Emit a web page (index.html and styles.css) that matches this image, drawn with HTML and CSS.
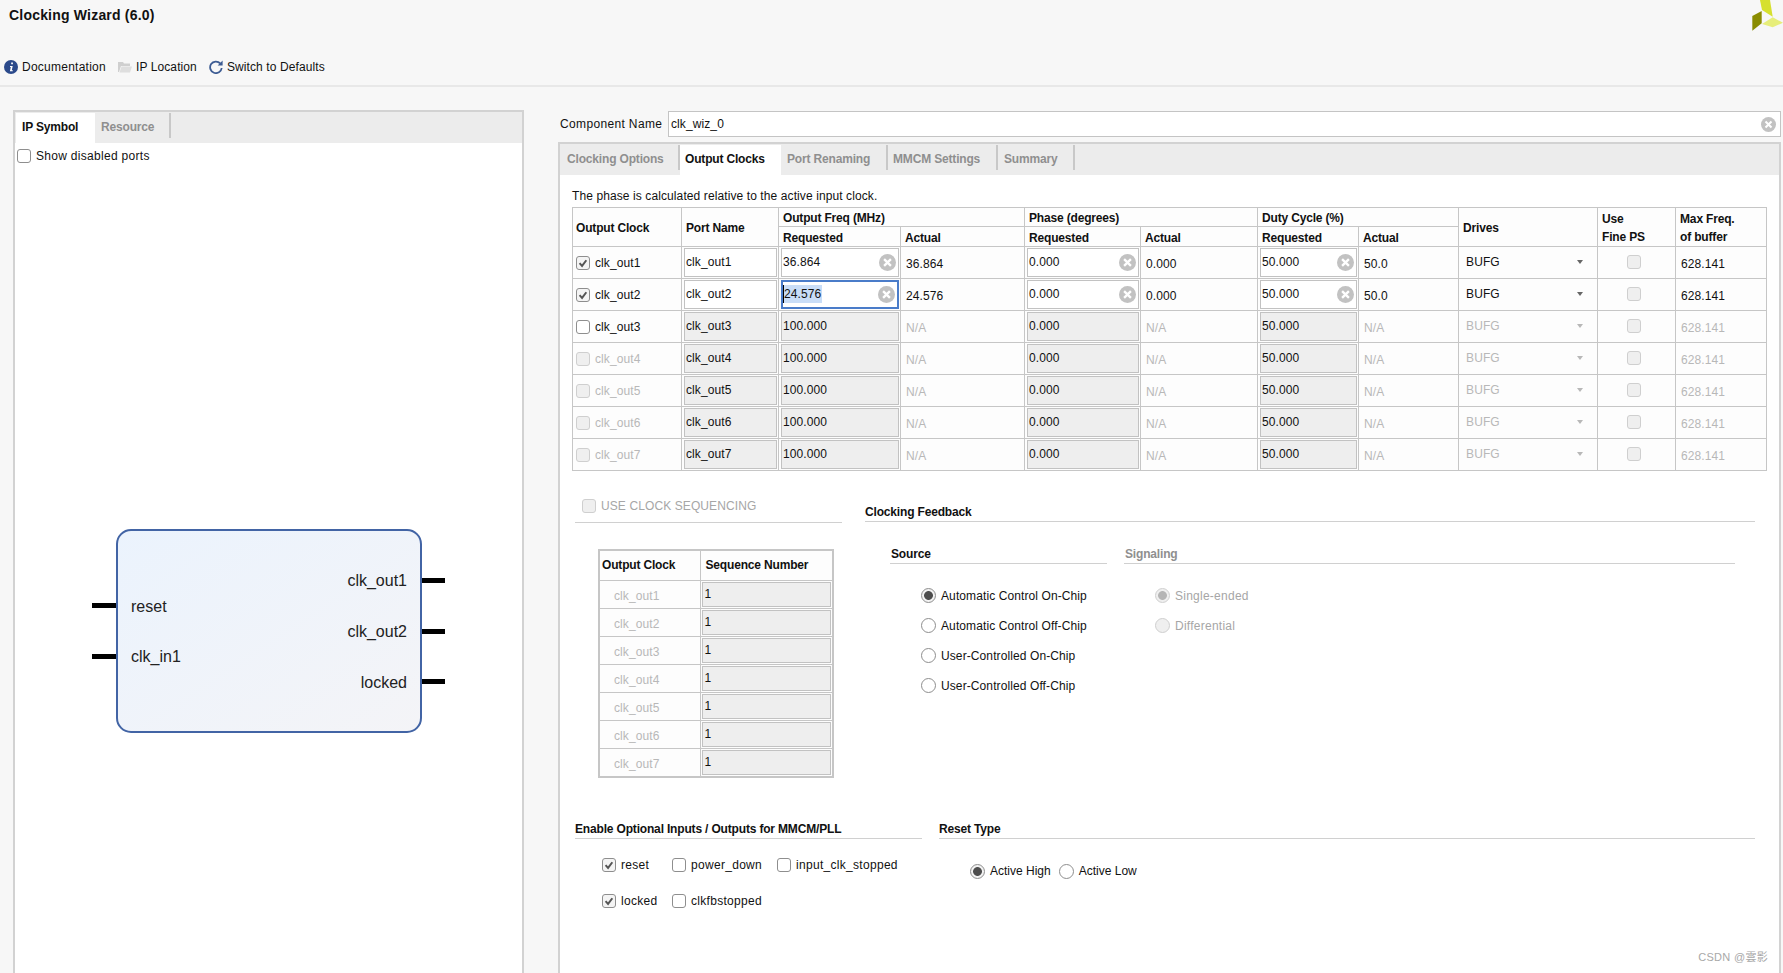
FILE: index.html
```html
<!DOCTYPE html>
<html lang="en">
<head>
<meta charset="utf-8">
<title>Clocking Wizard (6.0)</title>
<link rel="stylesheet" href="styles.css">
</head>
<body>
<svg class="defs" width="0" height="0">
  <symbol id="check" viewBox="0 0 14 14"><path d="M3 7.200l2.900 3.200 5-6.600" fill="none" stroke="#555" stroke-width="2.300"/></symbol>
  <symbol id="clear" viewBox="0 0 16 16"><circle cx="8" cy="8" r="8" fill="#c2c2c2"/><path d="M4.800 4.800l6.400 6.400M11.200 4.800l-6.400 6.400" stroke="#fff" stroke-width="2.200"/></symbol>
</svg>
<header class="top">
  <div class="top-row">
    <div class="title">Clocking Wizard (6.0)</div>
    <svg class="logo" width="31" height="31" viewBox="0 0 31 31">
      <path d="M8 0h10l2.700 16.700L10 10z" fill="#d6e02f"/>
      <path d="M10 24l10.700-6.700L31 22.700l-10.300 4.600z" fill="#e7ee7a"/>
      <path d="M.3 16l9.400-5v12.300L.3 30.700z" fill="#8a8c00"/>
    </svg>
  </div>
  <nav class="toolbar">
    <span class="tool tool-doc"><svg width="14" height="14" viewBox="0 0 14 14"><circle cx="7" cy="7" r="7" fill="#2b4a8b"/><path d="M7.200 2.600h1.700v1.600H7.200zM6 6h2.700L7.800 10.300h1v1H5.900l.9-4.300H6z" fill="#fff"/></svg>Documentation</span>
    <span class="tool tool-loc"><svg width="14" height="14" viewBox="0 0 14 14"><path d="M0 2h5l1 1.500h6V6H3L1 12H0z" fill="#cfcfcf"/><path d="M3.500 6.500H14L12 12.500H1.500z" fill="#dedede"/></svg>IP Location</span>
    <span class="tool"><svg width="14" height="14" viewBox="0 0 14 14"><path d="M11.200 3.400A5.800 5.800 0 1 0 12.700 8" fill="none" stroke="#3d5c93" stroke-width="1.800"/><path d="M13.600 .6v5h-5z" fill="#3d5c93"/></svg>Switch to Defaults</span>
  </nav>
</header>
<main class="main">
  <section class="panel left-panel">
    <div class="tabs">
      <div class="tab active t-sym">IP Symbol</div>
      <div class="tab t-res">Resource</div>
    </div>
    <label class="opt show-ports"><span class="cb"></span>Show disabled ports</label>
    <svg class="symbol" width="380" height="230" viewBox="80 515 380 230">
      <defs><linearGradient id="blk" x1="0" y1="0" x2="1" y2="1"><stop offset="0" stop-color="#ebf3fd"/><stop offset="1" stop-color="#f4f4f7"/></linearGradient></defs>
      <rect x="117" y="530" width="304" height="202" rx="14" fill="url(#blk)" stroke="#4264a5" stroke-width="2"/>
      <g class="pins">
        <path d="M92 605.500h24M92 656.500h24M422 580.500h23M422 631.500h23M422 681.500h23"/>
      </g>
      <text class="pin-label" x="131" y="612">reset</text>
      <text class="pin-label" x="131" y="662">clk_in1</text>
      <text class="pin-label end" x="407" y="586">clk_out1</text>
      <text class="pin-label end" x="407" y="637">clk_out2</text>
      <text class="pin-label end" x="407" y="688">locked</text>
    </svg>
  </section>
  <div class="right-col">
    <div class="comp-row">
      <span class="comp-label">Component Name</span>
      <div class="comp-input"><span>clk_wiz_0</span><svg class="clear small"><use href="#clear"/></svg></div>
    </div>
    <section class="panel right-panel">
      <div class="tabs">
        <div class="tab t1">Clocking Options</div>
        <div class="tab active t2">Output Clocks</div>
        <div class="tab t3">Port Renaming</div>
        <div class="tab t4">MMCM Settings</div>
        <div class="tab t5">Summary</div>
      </div>
      <div class="pane">
        <p class="note">The phase is calculated relative to the active input clock.</p>
        <table class="clocks">
          <colgroup>
            <col class="c1"><col class="c2"><col class="c3"><col class="c4"><col class="c5"><col class="c6"><col class="c7"><col class="c8"><col class="c9"><col class="c10"><col class="c11">
          </colgroup>
          <thead>
            <tr class="h1">
              <th rowspan="2" class="first">Output Clock</th><th rowspan="2">Port Name</th>
              <th colspan="2">Output Freq (MHz)</th><th colspan="2">Phase (degrees)</th><th colspan="2">Duty Cycle (%)</th>
              <th rowspan="2">Drives</th><th rowspan="2" class="two">Use<br>Fine PS</th><th rowspan="2" class="two">Max Freq.<br>of buffer</th>
            </tr>
            <tr class="h2"><th>Requested</th><th>Actual</th><th>Requested</th><th>Actual</th><th>Requested</th><th>Actual</th></tr>
          </thead>
          <tbody>
            <tr>
              <td class="first"><label class="opt"><span class="cb on"><svg><use href="#check"/></svg></span>clk_out1</label></td>
              <td class="fc"><div class="field">clk_out1</div></td>
              <td class="fc"><div class="field"><span>36.864</span><svg class="clear"><use href="#clear"/></svg></div></td>
              <td class="val">36.864</td>
              <td class="fc"><div class="field"><span>0.000</span><svg class="clear"><use href="#clear"/></svg></div></td>
              <td class="val">0.000</td>
              <td class="fc"><div class="field"><span>50.000</span><svg class="clear"><use href="#clear"/></svg></div></td>
              <td class="val">50.0</td>
              <td><div class="drive"><span>BUFG</span><i class="caret"></i></div></td>
              <td class="mid"><span class="cb off"></span></td>
              <td class="val">628.141</td>
            </tr>
            <tr>
              <td class="first"><label class="opt"><span class="cb on"><svg><use href="#check"/></svg></span>clk_out2</label></td>
              <td class="fc"><div class="field">clk_out2</div></td>
              <td class="fc"><div class="field focus"><span class="sel">24.576</span><svg class="clear"><use href="#clear"/></svg></div></td>
              <td class="val">24.576</td>
              <td class="fc"><div class="field"><span>0.000</span><svg class="clear"><use href="#clear"/></svg></div></td>
              <td class="val">0.000</td>
              <td class="fc"><div class="field"><span>50.000</span><svg class="clear"><use href="#clear"/></svg></div></td>
              <td class="val">50.0</td>
              <td><div class="drive"><span>BUFG</span><i class="caret"></i></div></td>
              <td class="mid"><span class="cb off"></span></td>
              <td class="val">628.141</td>
            </tr>
            <tr>
              <td class="first"><label class="opt"><span class="cb"></span>clk_out3</label></td>
              <td class="fc"><div class="field dis">clk_out3</div></td>
              <td class="fc"><div class="field dis">100.000</div></td>
              <td class="val na">N/A</td>
              <td class="fc"><div class="field dis">0.000</div></td>
              <td class="val na">N/A</td>
              <td class="fc"><div class="field dis">50.000</div></td>
              <td class="val na">N/A</td>
              <td><div class="drive na"><span>BUFG</span><i class="caret"></i></div></td>
              <td class="mid"><span class="cb off"></span></td>
              <td class="val na">628.141</td>
            </tr>
            <tr>
              <td class="first"><label class="opt na"><span class="cb off"></span>clk_out4</label></td>
              <td class="fc"><div class="field dis">clk_out4</div></td>
              <td class="fc"><div class="field dis">100.000</div></td>
              <td class="val na">N/A</td>
              <td class="fc"><div class="field dis">0.000</div></td>
              <td class="val na">N/A</td>
              <td class="fc"><div class="field dis">50.000</div></td>
              <td class="val na">N/A</td>
              <td><div class="drive na"><span>BUFG</span><i class="caret"></i></div></td>
              <td class="mid"><span class="cb off"></span></td>
              <td class="val na">628.141</td>
            </tr>
            <tr>
              <td class="first"><label class="opt na"><span class="cb off"></span>clk_out5</label></td>
              <td class="fc"><div class="field dis">clk_out5</div></td>
              <td class="fc"><div class="field dis">100.000</div></td>
              <td class="val na">N/A</td>
              <td class="fc"><div class="field dis">0.000</div></td>
              <td class="val na">N/A</td>
              <td class="fc"><div class="field dis">50.000</div></td>
              <td class="val na">N/A</td>
              <td><div class="drive na"><span>BUFG</span><i class="caret"></i></div></td>
              <td class="mid"><span class="cb off"></span></td>
              <td class="val na">628.141</td>
            </tr>
            <tr>
              <td class="first"><label class="opt na"><span class="cb off"></span>clk_out6</label></td>
              <td class="fc"><div class="field dis">clk_out6</div></td>
              <td class="fc"><div class="field dis">100.000</div></td>
              <td class="val na">N/A</td>
              <td class="fc"><div class="field dis">0.000</div></td>
              <td class="val na">N/A</td>
              <td class="fc"><div class="field dis">50.000</div></td>
              <td class="val na">N/A</td>
              <td><div class="drive na"><span>BUFG</span><i class="caret"></i></div></td>
              <td class="mid"><span class="cb off"></span></td>
              <td class="val na">628.141</td>
            </tr>
            <tr>
              <td class="first"><label class="opt na"><span class="cb off"></span>clk_out7</label></td>
              <td class="fc"><div class="field dis">clk_out7</div></td>
              <td class="fc"><div class="field dis">100.000</div></td>
              <td class="val na">N/A</td>
              <td class="fc"><div class="field dis">0.000</div></td>
              <td class="val na">N/A</td>
              <td class="fc"><div class="field dis">50.000</div></td>
              <td class="val na">N/A</td>
              <td><div class="drive na"><span>BUFG</span><i class="caret"></i></div></td>
              <td class="mid"><span class="cb off"></span></td>
              <td class="val na">628.141</td>
            </tr>
          </tbody>
        </table>
        <div class="lower">
          <div class="seq-col">
            <label class="opt seq-head na2"><span class="cb off"></span>USE CLOCK SEQUENCING</label>
            <table class="seq">
              <colgroup><col class="s1"><col class="s2"></colgroup>
              <thead><tr><th class="first">Output Clock</th><th class="second">Sequence Number</th></tr></thead>
              <tbody>
                <tr><td class="sname">clk_out1</td><td class="fc"><div class="field dis">1</div></td></tr>
                <tr><td class="sname">clk_out2</td><td class="fc"><div class="field dis">1</div></td></tr>
                <tr><td class="sname">clk_out3</td><td class="fc"><div class="field dis">1</div></td></tr>
                <tr><td class="sname">clk_out4</td><td class="fc"><div class="field dis">1</div></td></tr>
                <tr><td class="sname">clk_out5</td><td class="fc"><div class="field dis">1</div></td></tr>
                <tr><td class="sname">clk_out6</td><td class="fc"><div class="field dis">1</div></td></tr>
                <tr><td class="sname">clk_out7</td><td class="fc"><div class="field dis">1</div></td></tr>
              </tbody>
            </table>
          </div>
          <div class="fb-col">
            <h3 class="sec">Clocking Feedback</h3>
            <div class="fb-groups">
              <div class="group g-src">
                <h4 class="sec">Source</h4>
                <div class="radios">
                  <label class="opt"><span class="rd on"></span>Automatic Control On-Chip</label>
                  <label class="opt"><span class="rd"></span>Automatic Control Off-Chip</label>
                  <label class="opt"><span class="rd"></span>User-Controlled On-Chip</label>
                  <label class="opt"><span class="rd"></span>User-Controlled Off-Chip</label>
                </div>
              </div>
              <div class="group g-sig">
                <h4 class="sec muted">Signaling</h4>
                <div class="radios">
                  <label class="opt na2"><span class="rd on off"></span>Single-ended</label>
                  <label class="opt na2"><span class="rd off"></span>Differential</label>
                </div>
              </div>
            </div>
          </div>
        </div>
        <div class="bottom">
          <div class="enable-col">
            <h3 class="sec">Enable Optional Inputs / Outputs for MMCM/PLL</h3>
            <div class="enable-grid">
              <label class="opt"><span class="cb on"><svg><use href="#check"/></svg></span>reset</label>
              <label class="opt"><span class="cb"></span>power_down</label>
              <label class="opt"><span class="cb"></span>input_clk_stopped</label>
              <label class="opt"><span class="cb on"><svg><use href="#check"/></svg></span>locked</label>
              <label class="opt"><span class="cb"></span>clkfbstopped</label>
            </div>
          </div>
          <div class="reset-col">
            <h3 class="sec">Reset Type</h3>
            <div class="reset-row">
              <label class="opt"><span class="rd on"></span>Active High</label>
              <label class="opt"><span class="rd"></span>Active Low</label>
            </div>
          </div>
        </div>
        <div class="mark">CSDN @雲影</div>
      </div>
    </section>
  </div>
</main>
</body>
</html>
```
FILE: styles.css
```css
* { box-sizing: border-box; }
html, body { margin: 0; padding: 0; }
body {
  width: 1783px;
  height: 973px;
  overflow: hidden;
  background: #f7f7f7;
  color: #111;
  font: 12px/14px "Liberation Sans", Arial, sans-serif;
  letter-spacing: 0.1px;
}
.defs { display: block; position: absolute; }

/* header */
.top { height: 87px; border-bottom: 2px solid #e8e8e8; }
.top-row { display: flex; justify-content: space-between; height: 59px; padding-left: 9px; }
.title { margin-top: 8px; font-size: 14px; line-height: 15px; font-weight: 700; letter-spacing: 0.2px; }
.logo { display: block; }
.toolbar { display: flex; height: 16px; padding-left: 4px; }
.tool { display: flex; align-items: center; gap: 4px; }
.tool-doc { margin-right: 12px; letter-spacing: 0.25px; }
.tool-loc { margin-right: 12px; }

/* main frames */
.main { display: flex; height: 900px; padding: 23px 2px 0 13px; }
.panel { background: #fff; border: 2px solid #d2d2d2; }
.left-panel { width: 511px; flex: none; }
.right-col { width: 1223px; margin-left: 34px; flex: none; }
.comp-row { display: flex; align-items: center; height: 26px; margin-top: 1px; padding-left: 2px; }
.comp-label { width: 108px; flex: none; letter-spacing: 0.35px; }
.comp-input {
  display: flex; align-items: center; justify-content: space-between;
  flex: 1; height: 26px; padding: 0 4px 0 2px;
  background: #fff; border: 1px solid #c4c4c4;
}
.right-panel { height: 860px; margin-top: 5px; }

/* tabs */
.tabs { display: flex; height: 31px; background: #ececec; align-items: flex-start; }
.tab {
  height: 25px; margin-top: 1px; line-height: 28px; font-weight: 700; color: #8f8f8f;
  border-right: 2px solid #c8c8c8; white-space: nowrap; letter-spacing: -0.17px;
}
.tab.active { height: 30px; background: #fff; color: #111; border-right: 0; }
.t-sym { width: 79px; padding-left: 6px; margin-left: 1px; }
.t-res { width: 76px; padding-left: 6px; }
.t1 { width: 120px; padding-left: 7px; }
.t2 { width: 101px; padding-left: 5px; }
.t3 { width: 107px; padding-left: 6px; }
.t4 { width: 110px; padding-left: 5px; }
.t5 { width: 77px; padding-left: 6px; }

/* options */
.opt { display: flex; align-items: center; gap: 5px; white-space: nowrap; }
.na { color: #b8b8b8; }
.na2 { color: #a6a6a6; }
.cb {
  display: inline-block; flex: none; width: 14px; height: 14px;
  background: #fff; border: 1px solid #8e8e8e; border-radius: 3px;
}
.cb svg { display: block; width: 12px; height: 12px; }
.cb.on { background: #f4f4f4; }
.cb.off { background: #efefef; border-color: #cfcfcf; }
.rd {
  display: inline-block; flex: none; width: 15px; height: 15px;
  background: #fff; border: 1px solid #8e8e8e; border-radius: 50%;
}
.rd.on { background: radial-gradient(circle, #4d4d4d 0 4px, #f2f2f2 4.800px); }
.rd.off { border-color: #cfcfcf; background: #efefef; }
.rd.on.off { background: radial-gradient(circle, #b5b5b5 0 4px, #efefef 4.800px); }

/* left panel */
.show-ports { margin: 6px 0 0 2px; height: 14px; letter-spacing: 0.3px; }
.symbol { display: block; margin: 352px 0 0 65px; }
.pins path { stroke: #000; stroke-width: 5; fill: none; }
.pin-label { font: 16px "Liberation Sans", Arial, sans-serif; fill: #222; letter-spacing: 0; }
.pin-label.end { text-anchor: end; }

/* right pane */
.pane { position: relative; padding-left: 12px; height: 797px; }
.note { margin: 0; padding-top: 14px; height: 32px; }
.clocks, .seq { border-collapse: collapse; table-layout: fixed; background: #fdfdfd; }
.clocks { width: 1194px; }
.clocks th, .clocks td, .seq th, .seq td { border: 1px solid #c6c6c6; padding: 0 0 0 4px; }
.clocks th, .seq th { text-align: left; font-weight: 700; vertical-align: middle; letter-spacing: -0.17px; }
.clocks .first, .seq .first { padding-left: 3px; }
.c1 { width: 109px; } .c2 { width: 97px; } .c3 { width: 122px; } .c4 { width: 124px; }
.c5 { width: 116px; } .c6 { width: 117px; } .c7 { width: 101px; } .c8 { width: 100px; }
.c9 { width: 139px; } .c10 { width: 78px; } .c11 { width: 91px; }
.h1 { height: 19px; } .h2 { height: 20px; }
.h1 th { padding-top: 1px; }
.h2 th { padding-top: 2px; }
.clocks th.two { line-height: 18px; padding-top: 2px; }
.clocks tbody tr { height: 32px; }
.clocks td.fc, .seq td.fc { padding: 1px 1px 1px 2px; }
.field {
  display: flex; align-items: center; justify-content: space-between;
  height: 29px; padding: 0 2px 2px 1px; background: #fff; border: 1px solid #c2c2c2;
}
.field.dis { background: #eeeeee; }
.field.focus { border: 2px solid #4a7cc9; padding-left: 0; }
.sel { background: #c9ddf7; border-left: 1px solid #000; line-height: 18px; width: 39px; margin-left: 0; }
.clear { display: block; flex: none; width: 17px; height: 17px; margin-top: 1px; }
.clear.small { width: 15px; height: 15px; margin-top: 0; }
.val { padding-top: 2px !important; padding-left: 5px !important; }
.drive { display: flex; align-items: center; justify-content: space-between; padding: 0 14px 2px 3px; }
.caret { display: block; width: 0; height: 0; border: 3px solid transparent; border-top: 4px solid #666; border-bottom: 0; }
.drive.na .caret { border-top-color: #b8b8b8; }
.clocks td.mid { padding: 0 5px 2px 0; text-align: center; }
.mid .cb { display: block; margin: 0 auto; }

/* lower area */
.lower { display: flex; padding-left: 3px; }
.seq-col { width: 267px; flex: none; margin-top: 26px; }
.seq-head { height: 26px; padding: 2px 0 9px 7px; border-bottom: 1px solid #d0d0d0; }
.seq { width: 234px; margin: 26px 0 0 23px; border: 2px solid #c6c6c6; }
.s1 { width: 101px; } .s2 { width: 133px; }
.seq thead tr { height: 30px; }
.seq tbody tr { height: 28px; }
.seq .first { padding-left: 2px; }
.seq .second { padding-left: 5px; }
.sname { color: #b8b8b8; padding-left: 14px !important; padding-top: 3px !important; }
.seq .field { height: 25px; padding: 0 2px 0 2px; }
.seq td.fc { padding: 1px; }

.sec { margin: 0; font-size: 12px; line-height: 14px; font-weight: 700; padding-bottom: 2px; border-bottom: 1px solid #d0d0d0; letter-spacing: -0.17px; }
.muted { color: #8f8f8f; }
.fb-col { width: 890px; margin: 34px 0 0 23px; flex: none; }
.fb-groups { display: flex; margin: 25px 0 0 25px; gap: 17px; }
.g-src { width: 217px; flex: none; }
.g-sig { width: 611px; flex: none; }
.group .sec { padding-left: 1px; }
.radios { display: flex; flex-direction: column; gap: 15px; margin-top: 24px; padding-left: 31px; }
.g-sig .radios { letter-spacing: 0.25px; }

.bottom { display: flex; margin-top: 44px; padding-left: 3px; }
.enable-col { width: 347px; flex: none; }
.reset-col { width: 816px; flex: none; margin-left: 17px; }
.enable-grid { display: grid; grid-template-columns: 70px 105px auto; row-gap: 22px; margin-top: 19px; padding-left: 27px; letter-spacing: 0.3px; }
.reset-row { display: flex; gap: 8px; margin-top: 25px; padding-left: 31px; letter-spacing: 0; }

.mark { position: absolute; right: 11px; bottom: 8px; color: #a8a8a8; font-size: 11px; letter-spacing: 0.3px; font-family: "Liberation Sans", "Noto Sans CJK TC", sans-serif; }
```
